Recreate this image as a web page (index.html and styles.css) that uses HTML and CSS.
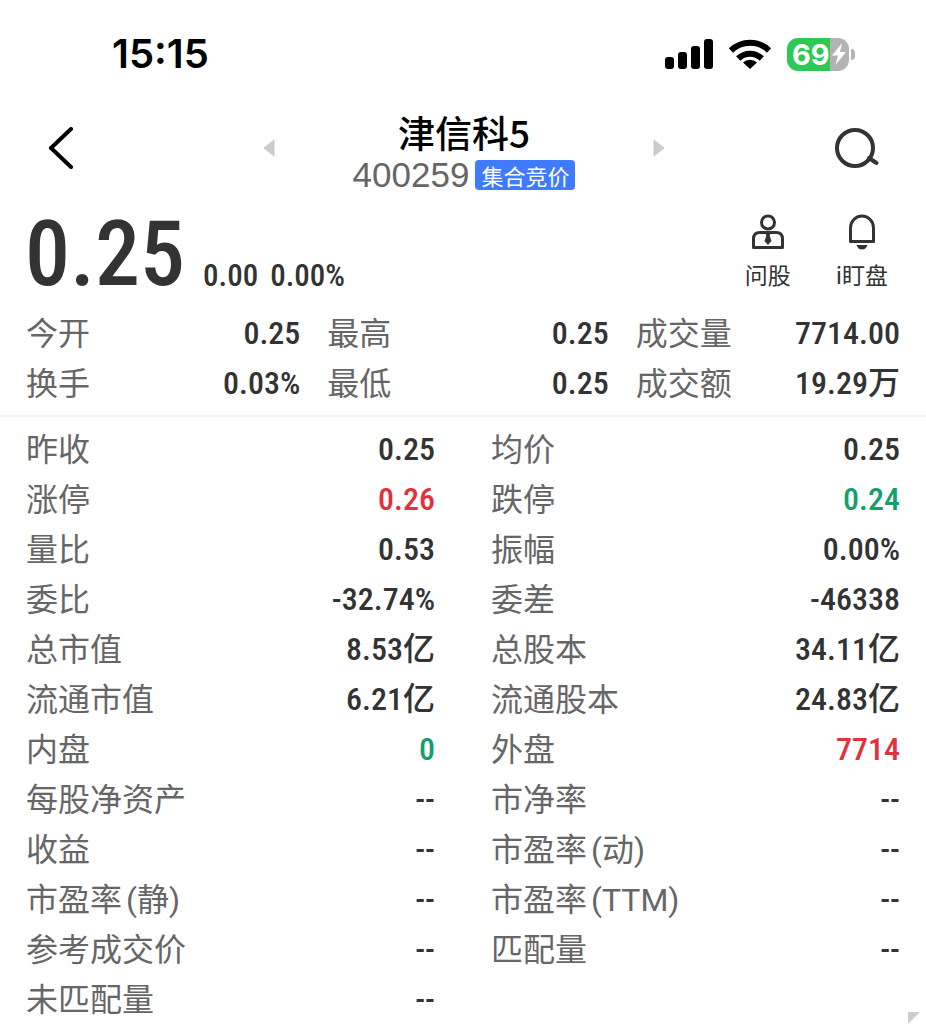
FILE: index.html
```html
<!DOCTYPE html>
<html lang="zh-CN">
<head>
<meta charset="utf-8">
<meta name="viewport" content="width=device-width, initial-scale=1">
<title>津信科5 400259</title>
<link rel="stylesheet" href="styles.css">
</head>
<body>
<div class="status-bar">
  <time class="clock">15:15</time>
  <div class="indicators">
    <svg class="signal" width="48" height="32" viewBox="0 0 48 32" aria-hidden="true">
      <rect x="0" y="19" width="9" height="12" rx="3"/>
      <rect x="13" y="14" width="9" height="17" rx="3"/>
      <rect x="26" y="8" width="9" height="23" rx="3"/>
      <rect x="39" y="1" width="9" height="30" rx="3"/>
    </svg>
    <svg class="wifi" width="42" height="32" viewBox="0 0 42 32" aria-hidden="true">
      <path d="M2 12.500A27 27 0 0 1 40 12.500" fill="none" stroke="#000" stroke-width="6"/>
      <path d="M9.200 20.500A17 17 0 0 1 32.800 20.500" fill="none" stroke="#000" stroke-width="6"/>
      <path d="M21 31L14 24.500A10 10 0 0 1 28 24.500Z"/>
    </svg>
    <div class="battery">
      <span class="battery-level">69</span>
      <svg class="bolt" width="16" height="24" viewBox="0 0 16 24" aria-hidden="true"><path d="M11 1L1 13.500H7L4.500 23L15 10H9Z"/></svg>
    </div>
    <span class="battery-cap"></span>
  </div>
</div>

<header class="header">
  <button class="icon-button back" aria-label="返回">
    <svg width="26" height="42" viewBox="0 0 26 42"><path d="M23 2L3 21L23 40" fill="none" stroke="#000" stroke-width="4" stroke-linecap="round" stroke-linejoin="round"/></svg>
  </button>
  <div class="title-nav">
    <button class="icon-button" aria-label="上一只">
      <svg width="12" height="18" viewBox="0 0 12 18"><path d="M11 1V17L1 9Z" fill="#ccc" stroke="#ccc" stroke-linejoin="round"/></svg>
    </button>
    <div class="title">
      <h1 class="name">津信科5</h1>
      <div class="code-line"><span class="code">400259</span><span class="tag">集合竞价</span></div>
    </div>
    <button class="icon-button" aria-label="下一只">
      <svg width="12" height="18" viewBox="0 0 12 18"><path d="M1 1V17L11 9Z" fill="#ccc" stroke="#ccc" stroke-linejoin="round"/></svg>
    </button>
  </div>
  <button class="icon-button search" aria-label="搜索">
    <svg width="46" height="42" viewBox="0 0 46 42"><circle cx="21" cy="21" r="18" fill="none" stroke="#333" stroke-width="4"/><path d="M35 31L42.500 36" stroke="#333" stroke-width="4" stroke-linecap="round"/></svg>
  </button>
</header>

<main>
  <section class="quote">
    <strong class="price">0.25</strong>
    <div class="change"><span>0.00</span><span>0.00%</span></div>
    <div class="actions">
      <button class="action">
        <svg width="34" height="36" viewBox="0 0 34 36" aria-hidden="true">
          <circle cx="17" cy="8.500" r="6.500" fill="none" stroke="#333" stroke-width="3"/>
          <path d="M2.500 33.500V25Q2.500 18.500 9 18.500H25Q31.500 18.500 31.500 25V33.500Z" fill="none" stroke="#333" stroke-width="3" stroke-linejoin="round"/>
          <path d="M14.500 19H19.500L18.700 22L20.500 27L17 31L13.500 27L15.300 22Z" fill="#333"/>
        </svg>
        <span>问股</span>
      </button>
      <button class="action">
        <svg width="34" height="36" viewBox="0 0 34 36" aria-hidden="true">
          <path d="M5.500 27.500V14A11.500 12 0 0 1 28.500 14V27.500Z" fill="none" stroke="#333" stroke-width="3" stroke-linejoin="round"/>
          <path d="M11.500 31H22.500Q21 35.500 17 35.500T11.500 31Z" fill="#333"/>
        </svg>
        <span>i盯盘</span>
      </button>
    </div>
  </section>

  <dl class="summary">
    <div class="item"><dt>今开</dt><dd>0.25</dd></div>
    <div class="item"><dt>最高</dt><dd>0.25</dd></div>
    <div class="item"><dt>成交量</dt><dd>7714.00</dd></div>
    <div class="item"><dt>换手</dt><dd>0.03%</dd></div>
    <div class="item"><dt>最低</dt><dd>0.25</dd></div>
    <div class="item"><dt>成交额</dt><dd>19.29万</dd></div>
  </dl>

  <dl class="details">
    <div class="item"><dt>昨收</dt><dd>0.25</dd></div>
    <div class="item"><dt>均价</dt><dd>0.25</dd></div>
    <div class="item"><dt>涨停</dt><dd class="up">0.26</dd></div>
    <div class="item"><dt>跌停</dt><dd class="down">0.24</dd></div>
    <div class="item"><dt>量比</dt><dd>0.53</dd></div>
    <div class="item"><dt>振幅</dt><dd>0.00%</dd></div>
    <div class="item"><dt>委比</dt><dd>-32.74%</dd></div>
    <div class="item"><dt>委差</dt><dd>-46338</dd></div>
    <div class="item"><dt>总市值</dt><dd>8.53亿</dd></div>
    <div class="item"><dt>总股本</dt><dd>34.11亿</dd></div>
    <div class="item"><dt>流通市值</dt><dd>6.21亿</dd></div>
    <div class="item"><dt>流通股本</dt><dd>24.83亿</dd></div>
    <div class="item"><dt>内盘</dt><dd class="down">0</dd></div>
    <div class="item"><dt>外盘</dt><dd class="up">7714</dd></div>
    <div class="item"><dt>每股净资产</dt><dd>--</dd></div>
    <div class="item"><dt>市净率</dt><dd>--</dd></div>
    <div class="item"><dt>收益</dt><dd>--</dd></div>
    <div class="item"><dt>市盈率<span class="note">(动)</span></dt><dd>--</dd></div>
    <div class="item"><dt>市盈率<span class="note">(静)</span></dt><dd>--</dd></div>
    <div class="item"><dt>市盈率<span class="note">(TTM)</span></dt><dd>--</dd></div>
    <div class="item"><dt>参考成交价</dt><dd>--</dd></div>
    <div class="item"><dt>匹配量</dt><dd>--</dd></div>
    <div class="item"><dt>未匹配量</dt><dd>--</dd></div>
  </dl>
  <span class="corner"></span>
</main>
</body>
</html>
```

FILE: styles.css
```css
* { box-sizing: border-box; }
body {
  margin: 0;
  background: #fff;
  color: #333;
  font-family: "Noto Sans CJK SC", sans-serif;
}
button {
  padding: 0;
  border: 0;
  background: none;
  color: inherit;
  font: inherit;
  cursor: pointer;
}
svg { display: block; }
dl, dd, h1 { margin: 0; }

.status-bar {
  display: flex;
  justify-content: space-between;
  align-items: center;
  height: 102px;
  padding: 6px 71px 0 112px;
  color: #000;
}
.clock {
  font: 600 40px/48px Inter, sans-serif;
}
.indicators { display: flex; align-items: center; }
.wifi { margin: 0 16px; }
.battery {
  display: flex;
  align-items: center;
  gap: 1px;
  width: 62px;
  height: 33px;
  padding-left: 5px;
  border-radius: 11px;
  background: linear-gradient(to right, #30c854 0 70%, #b3b3b3 70%);
}
.battery-level {
  color: #fff;
  font: 700 29px/33px Inter, sans-serif;
}
.bolt { fill: #fff; }
.battery-cap {
  width: 4px;
  height: 11px;
  margin-left: 2px;
  border-radius: 0 4px 4px 0;
  background: #b3b3b3;
}

.header {
  display: grid;
  grid-template-columns: 1fr auto 1fr;
  align-items: center;
  padding: 0 46px 0 48px;
}
.search { justify-self: end; }
.back { justify-self: start; }
.title-nav {
  display: flex;
  align-items: center;
  gap: 78px;
}
.title {
  padding-top: 9px;
  text-align: center;
}
.name {
  color: #000;
  font-size: 37px;
  font-weight: 500;
  line-height: 42px;
}
.code-line {
  display: flex;
  align-items: center;
  gap: 6px;
  margin-top: 3px;
}
.code {
  color: #666;
  font: 35px/38px "Liberation Sans", sans-serif;
}
.tag {
  padding: 0 6px;
  border-radius: 4px;
  background: #3f7bff;
  color: #fff;
  font-size: 22px;
  line-height: 30px;
}

.quote {
  display: flex;
  align-items: flex-end;
  height: 114px;
  padding: 0 38px 0 25px;
}
.price, .change, .item dd {
  font-family: "Roboto Condensed", Roboto, "Noto Sans CJK SC", sans-serif;
  font-weight: 500;
}
.price {
  font-size: 90px;
  line-height: 106px;
}
.change {
  display: flex;
  gap: 12px;
  padding: 0 0 12px 18px;
  font-size: 31px;
  line-height: 40px;
}
.actions {
  display: flex;
  gap: 45px;
  margin-left: auto;
  padding-bottom: 18px;
}
.action {
  display: flex;
  flex-direction: column;
  align-items: center;
  gap: 8px;
  font-size: 23px;
  line-height: 32px;
}

.summary, .details {
  display: grid;
  grid-auto-rows: 50px;
  padding: 0 26px;
}
.summary {
  grid-template-columns: 274fr 281fr 264fr;
  column-gap: 27px;
  padding-bottom: 7px;
  border-bottom: 2px solid #f3f3f3;
}
.details {
  grid-template-columns: 1fr 1fr;
  column-gap: 56px;
  padding-top: 7px;
}
.item {
  display: flex;
  justify-content: space-between;
  line-height: 50px;
  white-space: nowrap;
}
.item dt {
  color: #666;
  font-size: 32px;
  line-height: 46px;
}
.item dd { font-size: 32px; }
.item .up { color: #e3303a; }
.item .down { color: #12a06c; }
.note {
  margin-left: 4px;
  font-family: Roboto, "Noto Sans CJK SC", sans-serif;
}

.corner {
  position: absolute;
  right: 6px;
  top: 1012px;
  width: 12px;
  height: 12px;
  background: #ccc;
  clip-path: polygon(0 0, 100% 0, 0 100%);
}
```
